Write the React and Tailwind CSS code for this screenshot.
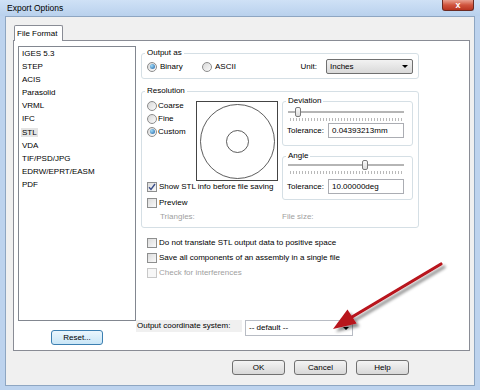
import React from "react";

const Radio = ({ checked }) => (
  <span className="w-[10px] h-[10px] shrink-0 rounded-full border border-[#8c8c8c] bg-linear-to-br from-[#d8d8d8] to-[#fbfbfb] flex items-center justify-center">
    {checked && (
      <span className="w-[5px] h-[5px] rounded-full bg-[radial-gradient(circle_at_35%_35%,#9fdcfa,#1d5fa3)]" />
    )}
  </span>
);

const Check = ({ checked, disabled }) => (
  <span
    className={
      "w-[10px] h-[10px] shrink-0 border flex items-center justify-center " +
      (disabled
        ? "border-[#c8c8c8] bg-[#f7f7f7]"
        : "border-[#8e8f8f] bg-linear-to-br from-[#dcdcdc] to-[#fafafa]")
    }
  >
    {checked && (
      <svg width="8" height="8" viewBox="0 0 8 8">
        <path d="M1 4.2 L3 6.5 L7 1" fill="none" stroke="#3b4f8a" strokeWidth="1.4" />
      </svg>
    )}
  </span>
);

const Btn = ({ children, def, className = "" }) => (
  <div
    className={
      "h-[15px] rounded-[3px] border flex items-center justify-center " +
      (def
        ? "border-[#3c7fb1] bg-linear-to-b from-[#eaf6fd] to-[#c9e6f7] "
        : "border-[#707070] bg-linear-to-b from-[#f4f4f4] to-[#d8d8d8] ") +
      className
    }
  >
    {children}
  </div>
);

const Slider = ({ pos }) => (
  <div className="flex flex-col">
    <div className="relative h-[10px] mr-[3px]">
      <div className="absolute left-0 right-0 top-[4px] h-[2px] border border-[#b5b5b5] bg-[#e8e8e8]" />
      <div
        className="absolute top-0 w-[6px] h-[10px] rounded-[2px] border border-[#7a7a7a] bg-linear-to-b from-[#fbfbfb] to-[#dcdcdc]"
        style={{ left: pos }}
      />
    </div>
    <div className="h-[3px] mt-[1px] mx-[2px] mr-[5px] bg-[repeating-linear-gradient(90deg,#b9b9b9_0px,#b9b9b9_1px,transparent_1px,transparent_3px)]" />
  </div>
);

const Group = ({ label, className = "", children }) => (
  <fieldset className={"border border-[#d5dfe5] rounded-[3px] px-[5px] " + className}>
    <legend className="px-[2px] -ml-[2px] leading-[8px]">{label}</legend>
    {children}
  </fieldset>
);

const items = [
  "IGES 5.3",
  "STEP",
  "ACIS",
  "Parasolid",
  "VRML",
  "IFC",
  "STL",
  "VDA",
  "TIF/PSD/JPG",
  "EDRW/EPRT/EASM",
  "PDF",
];

export default function App() {
  return (
    <div className="relative w-[480px] h-[390px] overflow-hidden bg-[#bdd3ee] font-['Liberation_Sans',Arial,sans-serif] text-[8px] text-black flex flex-col">
      {/* title bar */}
      <div className="h-[16px] shrink-0 flex items-start bg-linear-to-b from-[#cfe1f6] to-[#b9d1ed]">
        <div className="pl-[7px] pt-[3px] text-[8.5px] leading-[10px]">Export Options</div>
        <div className="ml-auto mr-[6px] w-[32px] h-[11px] rounded-b-[3px] border border-t-0 border-[#6b2a22] bg-linear-to-b from-[#e8a090] via-[#d0543e] to-[#b93420] flex items-center justify-center text-white font-bold text-[9px] leading-[9px]">
          x
        </div>
      </div>
      {/* client */}
      <div className="mx-[5px] h-[370px] border border-[#8ea6c2] bg-[#f0f0f0] flex flex-col">
        <div className="mt-[8px] ml-[8px] relative z-10 -mb-px w-[49px] h-[16px] bg-white border border-b-0 border-[#898c95] rounded-t-[2px] flex items-center pl-[2px]">
          File Format
        </div>
        <div className="ml-[7px] w-[457px] h-[311px] border border-[#898c95] bg-white flex">
          {/* left column */}
          <div className="pl-[4px] pt-[5px] w-[122px] flex flex-col">
            <div className="w-[118px] h-[275px] border border-[#828790] bg-white pt-0 pl-[3px]">
              {items.map((t) => (
                <div key={t} className="leading-[13.1px]">
                  <span className={t === "STL" ? "bg-[#e4e4e4] px-[1px] -ml-[1px]" : ""}>{t}</span>
                </div>
              ))}
            </div>
            <Btn def className="mt-[9px] w-[52px] self-center">
              Reset...
            </Btn>
          </div>
          {/* right column */}
          <div className="flex flex-col pt-[8px]">
            <Group label="Output as" className="ml-[5px] w-[278px] pb-[4px]">
              <div className="mt-[2px] h-[15px] flex items-center">
                <div className="w-[55px] flex items-center">
                  <Radio checked />
                  <span className="ml-[3px]">Binary</span>
                </div>
                <div className="flex items-center">
                  <Radio />
                  <span className="ml-[3px]">ASCII</span>
                </div>
                <span className="ml-auto mr-[9px]">Unit:</span>
                <div className="w-[87px] h-[15px] rounded-[2px] border border-[#707070] bg-linear-to-b from-[#f2f2f2] to-[#d9d9d9] flex items-center pl-[3px]">
                  Inches
                  <span className="ml-auto mr-[4px] w-0 h-0 border-l-[3px] border-r-[3px] border-t-[3px] border-l-transparent border-r-transparent border-t-black" />
                </div>
              </div>
            </Group>
            <Group label="Resolution" className="ml-[5px] mt-[8px] w-[278px] pb-[5px]">
              <div className="flex">
                <div className="w-[131px] flex flex-col">
                  <div className="mt-[4px] flex">
                    <div className="w-[49px] flex flex-col">
                      {["Coarse", "Fine", "Custom"].map((t) => (
                        <div key={t} className="h-[13px] flex items-center">
                          <Radio checked={t === "Custom"} />
                          <span className="ml-[1px]">{t}</span>
                        </div>
                      ))}
                    </div>
                    <div className="mt-[2px] w-[82px] h-[80px] border border-[#444] bg-white">
                      <svg width="80" height="78" viewBox="0 0 80 78">
                        <circle cx="40.5" cy="39.5" r="37" fill="none" stroke="#333" strokeWidth="0.8" />
                        <circle cx="40.5" cy="39.5" r="11" fill="none" stroke="#333" strokeWidth="0.8" />
                      </svg>
                    </div>
                  </div>
                  <div className="h-[12px] flex items-center">
                    <Check checked />
                    <span className="ml-[2px]">Show STL info before file saving</span>
                  </div>
                  <div className="mt-[4px] h-[12px] flex items-center">
                    <Check />
                    <span className="ml-[2px]">Preview</span>
                  </div>
                </div>
                <div className="ml-[4px] w-[131px] flex flex-col">
                  <Group label="Deviation" className="mt-[2px] pb-[7px]">
                    <div className="mt-[2px]">
                      <Slider pos={7} />
                    </div>
                    <div className="mt-[2px] flex items-center">
                      <span className="-ml-[1px]">Tolerance:</span>
                      <div className="ml-auto mr-[3px] w-[76px] h-[15px] border border-[#abadb3] bg-white flex items-center pl-[3px]">
                        0.04393213mm
                      </div>
                    </div>
                  </Group>
                  <Group label="Angle" className="mt-[6px] pb-[5px]">
                    <Slider pos={74} />
                    <div className="mt-[5px] flex items-center">
                      <span className="-ml-[1px]">Tolerance:</span>
                      <div className="ml-auto mr-[3px] w-[76px] h-[15px] border border-[#abadb3] bg-white flex items-center pl-[3px]">
                        10.00000deg
                      </div>
                    </div>
                  </Group>
                </div>
              </div>
              <div className="mt-[3px] h-[10px] flex items-center text-[#a0a0a0]">
                <span className="w-[135px] pl-[13px]">Triangles:</span>
                <span>File size:</span>
              </div>
            </Group>
            <div className="ml-[11px] mt-[7px] flex flex-col">
              <div className="h-[15px] flex items-center">
                <Check />
                <span className="ml-[2px]">Do not translate STL output data to positive space</span>
              </div>
              <div className="h-[15px] flex items-center">
                <Check />
                <span className="ml-[2px]">Save all components of an assembly in a single file</span>
              </div>
              <div className="h-[15px] flex items-center text-[#a0a0a0]">
                <Check disabled />
                <span className="ml-[2px]">Check for interferences</span>
              </div>
            </div>
            <div className="mt-[40px] flex items-start">
              <span className="w-[106px] h-[12px] bg-[#f0f0f0] pl-[1px] leading-[12px]">Output coordinate system:</span>
              <div className="ml-[3px] w-[108px] h-[16px] border border-[#b8bcc4] bg-white flex items-center pl-[3px]">
                -- default --
                <span className="ml-auto mr-[3px] w-0 h-0 border-l-[3px] border-r-[3px] border-t-[3px] border-l-transparent border-r-transparent border-t-black" />
              </div>
            </div>
          </div>
        </div>
        <div className="mt-[9px] ml-[226px] flex gap-[9px]">
          <Btn className="w-[53px]">OK</Btn>
          <Btn className="w-[53px]">Cancel</Btn>
          <Btn className="w-[53px]">Help</Btn>
        </div>
      </div>
      {/* annotation arrow */}
      <svg className="absolute left-0 top-0 pointer-events-none" width="480" height="390" viewBox="0 0 480 390">
        <defs>
          <filter id="sh" x="-20%" y="-20%" width="140%" height="140%">
            <feDropShadow dx="3" dy="3" stdDeviation="1.6" floodColor="#000" floodOpacity="0.45" />
          </filter>
        </defs>
        <g filter="url(#sh)">
          <line x1="441" y1="264" x2="352" y2="317" stroke="#b8121b" strokeWidth="3.2" strokeLinecap="round" />
          <polygon points="333,329 347.5,309.5 356.5,323.5" fill="#b8121b" />
        </g>
      </svg>
    </div>
  );
}
